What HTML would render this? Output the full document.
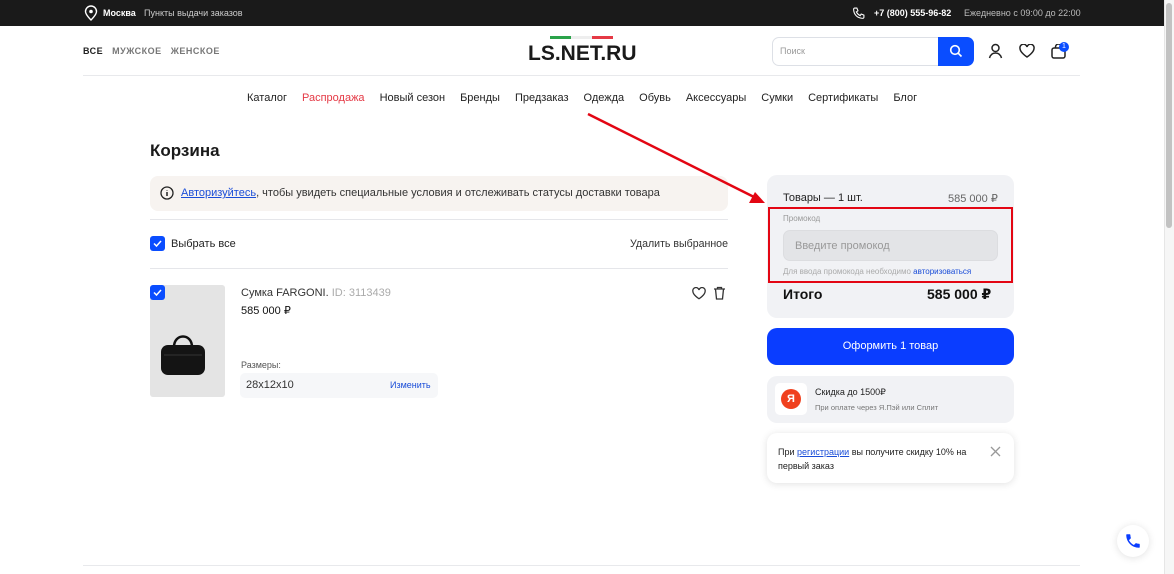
<!DOCTYPE html>
<html><head><meta charset="utf-8"><style>
*{margin:0;padding:0;box-sizing:border-box}
body{width:1174px;height:574px;overflow:hidden;background:#fff;font-family:"Liberation Sans","DejaVu Sans",sans-serif;color:#111;position:relative}
.a{position:absolute;white-space:nowrap}
.top{left:0;top:0;width:1164px;height:26px;background:#1a1a1a}
.sb{left:1164px;top:0;width:10px;height:574px;background:#f6f6f6;border-left:1px solid #e6e6e6}
.thumb{left:1166px;top:3px;width:6px;height:225px;background:#c2c2c2;border-radius:3px}
.nav span{margin-right:15px}
.card{background:#f1f2f5;border-radius:10px}
</style></head><body>
<div class="a top"></div>
<svg class="a" style="left:84px;top:5px" width="14" height="16" viewBox="0 0 14 16"><path d="M7 15s-5.5-5.2-5.5-8.5a5.5 5.5 0 0111 0C12.5 9.8 7 15 7 15z" fill="none" stroke="#fff" stroke-width="1.4"/><circle cx="7" cy="6.5" r="1.8" fill="#fff"/></svg>
<div class="a" style="left:103px;top:8px;font-size:9px;color:#fff;font-weight:bold">Москва</div>
<div class="a" style="left:144px;top:8px;font-size:9px;color:#ccc">Пункты выдачи заказов</div>
<svg class="a" style="left:852px;top:7px" width="13" height="13" viewBox="0 0 24 24"><path d="M5 2l4 0 2 5-3 2c1.5 3 4 5.5 7 7l2-3 5 2v4c0 1-1 2-2 2C10 21 3 14 3 4c0-1 1-2 2-2z" fill="none" stroke="#fff" stroke-width="2"/></svg>
<div class="a" style="left:874px;top:8px;font-size:9px;color:#fff;font-weight:bold">+7 (800) 555-96-82</div>
<div class="a" style="left:964px;top:8px;font-size:9px;color:#bbb">Ежедневно с 09:00 до 22:00</div>
<div class="a sb"></div><div class="a thumb"></div>

<div class="a" style="left:83px;top:46px;font-size:9px;font-weight:bold;letter-spacing:.5px;color:#222">ВСЕ <span style="color:#777;margin-left:6px">МУЖСКОЕ</span> <span style="color:#777;margin-left:6px">ЖЕНСКОЕ</span></div>
<div class="a" style="left:550px;top:36px;width:21px;height:3px;background:#2aa34a"></div>
<div class="a" style="left:571px;top:36px;width:21px;height:3px;background:#eee"></div>
<div class="a" style="left:592px;top:36px;width:21px;height:3px;background:#e53945"></div>
<div class="a" style="left:528px;top:42px;font-size:21px;font-weight:bold;color:#1a1a1a;letter-spacing:0">LS.NET.RU</div>
<div class="a" style="left:772px;top:37px;width:168px;height:29px;border:1px solid #dde0e6;border-radius:7px 0 0 7px"></div>
<div class="a" style="left:780px;top:46px;font-size:9px;color:#999">Поиск</div>
<div class="a" style="left:938px;top:37px;width:36px;height:29px;background:#0a4dff;border-radius:0 7px 7px 0"></div>
<svg class="a" style="left:949px;top:44px" width="14" height="14" viewBox="0 0 14 14"><circle cx="6" cy="6" r="4.3" fill="none" stroke="#fff" stroke-width="1.6"/><path d="M9.2 9.2l3.3 3.3" stroke="#fff" stroke-width="1.6"/></svg>
<svg class="a" style="left:988px;top:43px" width="15" height="16" viewBox="0 0 15 16"><circle cx="7.5" cy="5" r="3.5" fill="none" stroke="#222" stroke-width="1.5"/><path d="M1.5 15c1-3.5 3-5 6-5s5 1.5 6 5" fill="none" stroke="#222" stroke-width="1.5"/></svg>
<svg class="a" style="left:1019px;top:44px" width="16" height="14" viewBox="0 0 16 14"><path d="M8 13S1 8.5 1 4.5A3.5 3.5 0 018 3a3.5 3.5 0 017 1.5C15 8.5 8 13 8 13z" fill="none" stroke="#222" stroke-width="1.5"/></svg>
<svg class="a" style="left:1051px;top:44px" width="16" height="15" viewBox="0 0 16 15"><rect x="1" y="4" width="13" height="10" rx="2" fill="none" stroke="#222" stroke-width="1.5"/><path d="M4.5 4V3a3 3 0 016 0v1" fill="none" stroke="#222" stroke-width="1.5"/></svg>
<div class="a" style="left:1059px;top:42px;width:10px;height:10px;border-radius:5px;background:#0a4dff;color:#fff;font-size:7px;text-align:center;line-height:10px">1</div>
<div class="a" style="left:83px;top:75px;width:997px;height:1px;background:#e8e9ec"></div>
<div class="a nav" style="left:247px;top:92px;font-size:11px;color:#222"><span>Каталог</span><span style="color:#e53945">Распродажа</span><span>Новый сезон</span><span>Бренды</span><span>Предзаказ</span><span>Одежда</span><span>Обувь</span><span>Аксессуары</span><span>Сумки</span><span>Сертификаты</span><span>Блог</span></div>

<div class="a" style="left:150px;top:141px;font-size:17px;font-weight:bold;color:#1a1a1a">Корзина</div>
<div class="a" style="left:150px;top:176px;width:578px;height:35px;background:#f7f3f0;border-radius:8px"></div>
<svg class="a" style="left:160px;top:186px" width="14" height="14" viewBox="0 0 14 14"><circle cx="7" cy="7" r="6" fill="none" stroke="#222" stroke-width="1.3"/><path d="M7 6v4M7 4v.5" stroke="#222" stroke-width="1.5"/></svg>
<div class="a" style="left:181px;top:187px;font-size:11px;color:#333"><span style="color:#1a4dd8;text-decoration:underline">Авторизуйтесь</span>, чтобы увидеть специальные условия и отслеживать статусы доставки товара</div>
<div class="a" style="left:150px;top:219px;width:578px;height:1px;background:#e5e6ea"></div>
<div class="a" style="left:150px;top:236px;width:15px;height:15px;background:#0a4dff;border-radius:3px"></div>
<svg class="a" style="left:150px;top:236px" width="15" height="15"><path d="M4 7.5l2.5 2.5 4.5-5" fill="none" stroke="#fff" stroke-width="1.5"/></svg>
<div class="a" style="left:171px;top:238px;font-size:11px;color:#222">Выбрать все</div>
<div class="a" style="left:630px;top:238px;font-size:10.6px;color:#333">Удалить выбранное</div>
<div class="a" style="left:150px;top:268px;width:578px;height:1px;background:#e5e6ea"></div>

<div class="a" style="left:150px;top:285px;width:75px;height:112px;background:#e4e4e4;border-radius:3px"></div>
<div class="a" style="left:150px;top:285px;width:15px;height:15px;background:#0a4dff;border-radius:3px"></div>
<svg class="a" style="left:150px;top:285px" width="15" height="15"><path d="M4 7.5l2.5 2.5 4.5-5" fill="none" stroke="#fff" stroke-width="1.5"/></svg>
<svg class="a" style="left:158px;top:325px" width="50" height="55" viewBox="0 0 50 55"><path d="M16 22c0-14 18-14 18 0" fill="none" stroke="#111" stroke-width="2.5"/><rect x="3" y="20" width="44" height="30" rx="7" fill="#141414"/><path d="M6 30h38" stroke="#333"/></svg>
<div class="a" style="left:241px;top:287px;font-size:11px;color:#333">Сумка FARGONI. <span style="color:#aaa">ID: 3113439</span></div>
<div class="a" style="left:241px;top:304px;font-size:11px;color:#111">585 000 ₽</div>
<svg class="a" style="left:692px;top:287px" width="14" height="13" viewBox="0 0 16 14"><path d="M8 13S1 8.5 1 4.5A3.5 3.5 0 018 3a3.5 3.5 0 017 1.5C15 8.5 8 13 8 13z" fill="none" stroke="#333" stroke-width="1.5"/></svg>
<svg class="a" style="left:713px;top:286px" width="13" height="14" viewBox="0 0 13 14"><path d="M1 3h11M4.5 3V1.5h4V3M2.5 3l1 10h6l1-10" fill="none" stroke="#333" stroke-width="1.3"/></svg>
<div class="a" style="left:241px;top:360px;font-size:9px;color:#555">Размеры:</div>
<div class="a" style="left:240px;top:373px;width:198px;height:25px;background:#f6f7f9;border-radius:5px"></div>
<div class="a" style="left:246px;top:379px;font-size:11px;color:#333">28x12x10</div>
<div class="a" style="left:390px;top:380px;font-size:9px;color:#1a4dd8">Изменить</div>

<div class="a card" style="left:767px;top:175px;width:247px;height:143px"></div>
<div class="a" style="left:783px;top:192px;font-size:11px;color:#222">Товары — 1 шт.</div>
<div class="a" style="left:948px;top:192px;font-size:11px;color:#666">585 000 ₽</div>
<div class="a" style="left:783px;top:214px;font-size:8px;color:#999">Промокод</div>
<div class="a" style="left:783px;top:230px;width:215px;height:31px;background:#e3e4e7;border-radius:7px;border:1px solid #dcdde0"></div>
<div class="a" style="left:795px;top:240px;font-size:11px;color:#999">Введите промокод</div>
<div class="a" style="left:783px;top:267px;font-size:8px;color:#aaa">Для ввода промокода необходимо <span style="color:#1a4dd8">авторизоваться</span></div>
<div class="a" style="left:768px;top:207px;width:245px;height:76px;border:2.5px solid #e30613"></div>
<div class="a" style="left:783px;top:286px;font-size:14px;font-weight:bold;color:#111">Итого</div>
<div class="a" style="left:927px;top:286px;font-size:14px;font-weight:bold;color:#111">585 000 ₽</div>
<div class="a" style="left:767px;top:328px;width:247px;height:37px;background:#0a3dff;border-radius:10px;color:#fff;font-size:11px;text-align:center;line-height:37px">Оформить 1 товар</div>
<div class="a card" style="left:767px;top:376px;width:247px;height:47px"></div>
<div class="a" style="left:775px;top:383px;width:32px;height:32px;background:#fff;border-radius:5px"></div>
<div class="a" style="left:781px;top:389px;width:20px;height:20px;border-radius:10px;background:#f0401e;color:#fff;font-size:11px;font-weight:bold;text-align:center;line-height:20px">Я</div>
<div class="a" style="left:815px;top:387px;font-size:9px;color:#222">Скидка до 1500₽</div>
<div class="a" style="left:815px;top:403px;font-size:7.5px;color:#777">При оплате через Я.Пэй или Сплит</div>
<div class="a" style="left:767px;top:433px;width:247px;height:50px;background:#fff;border-radius:10px;box-shadow:0 1px 8px rgba(0,0,0,.12)"></div>
<div class="a" style="left:778px;top:445px;font-size:9px;color:#222;line-height:14px">При <span style="color:#1a4dd8;text-decoration:underline">регистрации</span> вы получите скидку 10% на<br>первый заказ</div>
<svg class="a" style="left:990px;top:446px" width="11" height="11"><path d="M1 1l9 9M10 1l-9 9" stroke="#999" stroke-width="1.3"/></svg>

<div class="a" style="left:1117px;top:525px;width:32px;height:32px;border-radius:16px;background:#fff;box-shadow:0 1px 8px rgba(0,0,0,.12)"></div>
<svg class="a" style="left:1124px;top:532px" width="18" height="18" viewBox="0 0 24 24"><path d="M6.6 10.8c1.4 2.8 3.8 5.1 6.6 6.6l2.2-2.2c.3-.3.7-.4 1-.2 1.1.4 2.3.6 3.6.6.6 0 1 .4 1 1V20c0 .6-.4 1-1 1C10.6 21 3 13.4 3 4c0-.6.4-1 1-1h3.5c.6 0 1 .4 1 1 0 1.3.2 2.5.6 3.6.1.3 0 .7-.2 1L6.6 10.8z" fill="#0a3dff"/></svg>
<div class="a" style="left:83px;top:565px;width:997px;height:1px;background:#e8e9ec"></div>

<svg class="a" style="left:0;top:0" width="1174" height="574"><line x1="588" y1="114" x2="756" y2="198" stroke="#e30613" stroke-width="2.5"/><path d="M765 203l-16 0 6-11z" fill="#e30613"/></svg>
</body></html>
